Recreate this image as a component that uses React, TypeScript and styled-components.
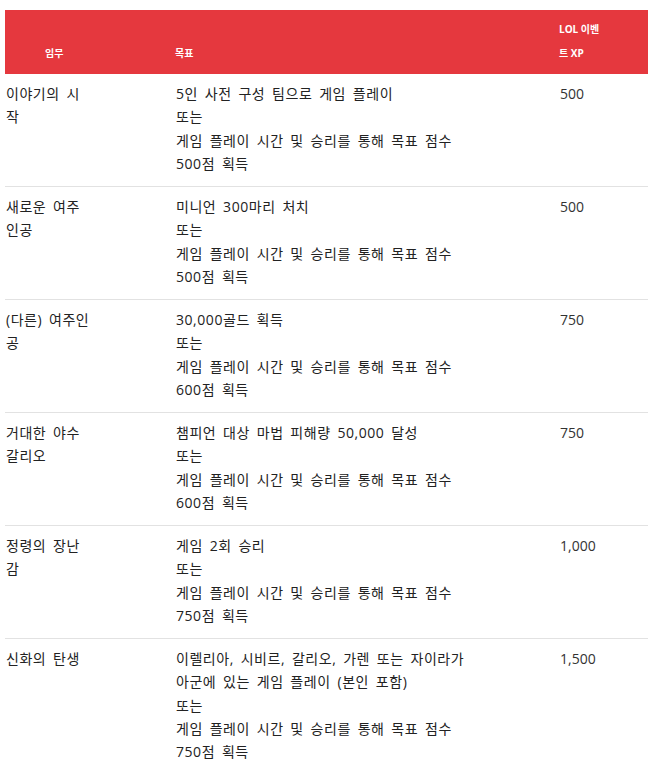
import React from "react";
import styled, { createGlobalStyle } from "styled-components";

const Global = createGlobalStyle`
  html, body { margin: 0; padding: 0; background: #fff; }
  body { font-family: "Open Sans", "Noto Sans CJK KR", sans-serif; color: #222; }
`;

const Table = styled.div`
  margin: 10px 2px 0 5px;
  display: grid;
  grid-template-columns: 170px 384px 1fr;
`;

const Head = styled.div<{ $pl?: number }>`
  background: #e5383e;
  color: #fff;
  font-size: 10px;
  font-weight: 700;
  line-height: 24px;
  padding: 7px 0 9px ${(p) => p.$pl ?? 0}px;
  display: flex;
  flex-direction: column;
  justify-content: flex-end;
  height: 64px;
  box-sizing: border-box;
`;

const Cell = styled.div<{ $last?: boolean }>`
  font-size: 14px;
  line-height: 23.33px;
  letter-spacing: 0.55px;
  word-spacing: 2.6px;
  padding: 8px 0 10.67px 1px;
  border-bottom: ${(p) => (p.$last ? "none" : "1px solid #e2e2e2")};
  display: flex;
  flex-direction: column;
`;

const Line = styled.span`
  display: block;
  white-space: nowrap;
`;

const Num = styled(Line)`
  color: #333;
  letter-spacing: 0;
`;

type Row = { name: string[]; goal: string[]; xp: string };

const rows: Row[] = [
  {
    name: ["이야기의 시", "작"],
    goal: ["5인 사전 구성 팀으로 게임 플레이", "또는", "게임 플레이 시간 및 승리를 통해 목표 점수", "500점 획득"],
    xp: "500",
  },
  {
    name: ["새로운 여주", "인공"],
    goal: ["미니언 300마리 처치", "또는", "게임 플레이 시간 및 승리를 통해 목표 점수", "500점 획득"],
    xp: "500",
  },
  {
    name: ["(다른) 여주인", "공"],
    goal: ["30,000골드 획득", "또는", "게임 플레이 시간 및 승리를 통해 목표 점수", "600점 획득"],
    xp: "750",
  },
  {
    name: ["거대한 야수", "갈리오"],
    goal: ["챔피언 대상 마법 피해량 50,000 달성", "또는", "게임 플레이 시간 및 승리를 통해 목표 점수", "600점 획득"],
    xp: "750",
  },
  {
    name: ["정령의 장난", "감"],
    goal: ["게임 2회 승리", "또는", "게임 플레이 시간 및 승리를 통해 목표 점수", "750점 획득"],
    xp: "1,000",
  },
  {
    name: ["신화의 탄생"],
    goal: [
      "이렐리아, 시비르, 갈리오, 가렌 또는 자이라가",
      "아군에 있는 게임 플레이 (본인 포함)",
      "또는",
      "게임 플레이 시간 및 승리를 통해 목표 점수",
      "750점 획득",
    ],
    xp: "1,500",
  },
];

export default function App() {
  return (
    <>
      <Global />
      <Table>
        <Head $pl={40}>
          <Line>임무</Line>
        </Head>
        <Head>
          <Line>목표</Line>
        </Head>
        <Head>
          <Line>LOL 이벤</Line>
          <Line>트 XP</Line>
        </Head>
        {rows.map((r, i) => {
          const last = i === rows.length - 1;
          return (
            <React.Fragment key={i}>
              <Cell $last={last}>
                {r.name.map((l, j) => (
                  <Line key={j}>{l}</Line>
                ))}
              </Cell>
              <Cell $last={last}>
                {r.goal.map((l, j) => (
                  <Line key={j}>{l}</Line>
                ))}
              </Cell>
              <Cell $last={last}>
                <Num>{r.xp}</Num>
              </Cell>
            </React.Fragment>
          );
        })}
      </Table>
    </>
  );
}
